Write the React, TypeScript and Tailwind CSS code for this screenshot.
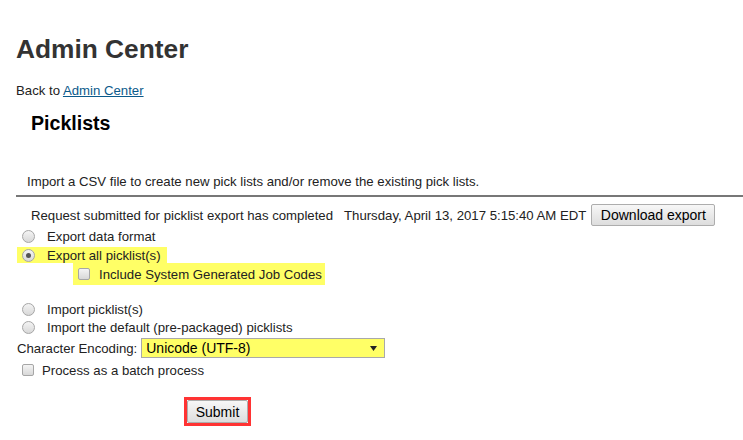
import React from "react";

function Radio({ checked = false }: { checked?: boolean }) {
  return (
    <span className="relative inline-block w-[13px] h-[13px] rounded-full border border-[#a6a6a6] bg-gradient-to-b from-[#f4f4f4] to-[#d8d8d8] shrink-0">
      {checked && (
        <span className="absolute left-[3px] top-[3px] w-[5px] h-[5px] rounded-full bg-[#555]" />
      )}
    </span>
  );
}

function Check() {
  return (
    <span className="inline-block w-[12px] h-[12px] rounded-[2px] border border-[#a6a6a6] bg-gradient-to-b from-[#f4f4f4] to-[#d8d8d8] shrink-0" />
  );
}

export default function App() {
  return (
    <div className="w-[743px] h-[440px] overflow-hidden bg-white font-['Liberation_Sans',Arial,sans-serif] text-[13.2px] leading-[15px] text-[#222]">
      <div className="pt-[34px] pl-[16px] text-[26.3px] leading-[30px] font-bold text-[#333]">
        Admin Center
      </div>
      <div className="mt-[19px] pl-[16px] h-[15px]">
        Back to{" "}
        <a href="#" className="text-[#0b5a8b] underline">
          Admin Center
        </a>
      </div>
      <div className="mt-[14px] pl-[31px] text-[19.6px] leading-[22px] font-bold text-black">
        Picklists
      </div>
      <div className="mt-[40px] pl-[27px] h-[15px]">
        Import a CSV file to create new pick lists and/or remove the existing pick lists.
      </div>
      <div className="mt-[6px] ml-[16px] h-[2px] bg-[#777]" />
      <div className="mt-[7px] flex items-center h-[22px]">
        <span className="pl-[31px]">Request submitted for picklist export has completed</span>
        <span className="ml-[11px]">Thursday, April 13, 2017 5:15:40 AM EDT</span>
        <button className="ml-[5px] h-[22px] w-[124px] border border-[#adadad] rounded-[2px] bg-gradient-to-b from-[#f7f7f7] to-[#dddddd] text-[14px] leading-[16px] text-black">
          Download export
        </button>
      </div>
      <div className="mt-[2px] h-[17px] flex items-center pl-[22px]">
        <Radio />
        <span className="ml-[12px]">Export data format</span>
      </div>
      <div className="mt-[2px] ml-[17px] w-[150px] h-[16px] flex items-center bg-[#ffff66] pl-[5px]">
        <Radio checked />
        <span className="ml-[12px]">Export all picklist(s)</span>
      </div>
      <div className="ml-[73px] w-[252px] h-[22px] flex items-center bg-[#ffff66] pl-[5px]">
        <Check />
        <span className="ml-[9px]">Include System Generated Job Codes</span>
      </div>
      <div className="mt-[15px] h-[18px] flex items-center pl-[22px]">
        <Radio />
        <span className="ml-[12px]">Import picklist(s)</span>
      </div>
      <div className="h-[18px] flex items-center pl-[22px]">
        <Radio />
        <span className="ml-[12px]">Import the default (pre-packaged) picklists</span>
      </div>
      <div className="mt-[2px] h-[20px] flex items-center pl-[17px]">
        <span>Character Encoding:</span>
        <div className="ml-[4px] w-[244px] h-[20px] border border-[#a9a9a9] bg-[#ffff66] flex items-center justify-between pl-[4px] pr-[7px] text-[14px] leading-[16px] text-black">
          <span>Unicode (UTF-8)</span>
          <svg width="7" height="5" viewBox="0 0 7 5">
            <path d="M0 0 L7 0 L3.5 5 Z" fill="#222" />
          </svg>
        </div>
      </div>
      <div className="mt-[3px] h-[18px] flex items-center pl-[22px]">
        <Check />
        <span className="ml-[8px]">Process as a batch process</span>
      </div>
      <div className="mt-[18px] pl-[184px] flex">
        <div className="border-[3px] border-[#ff3333] flex">
          <button className="w-[61px] h-[23px] border border-[#adadad] rounded-[2px] bg-gradient-to-b from-[#f7f7f7] to-[#dddddd] text-[14px] leading-[16px] text-black">
            Submit
          </button>
        </div>
      </div>
    </div>
  );
}
